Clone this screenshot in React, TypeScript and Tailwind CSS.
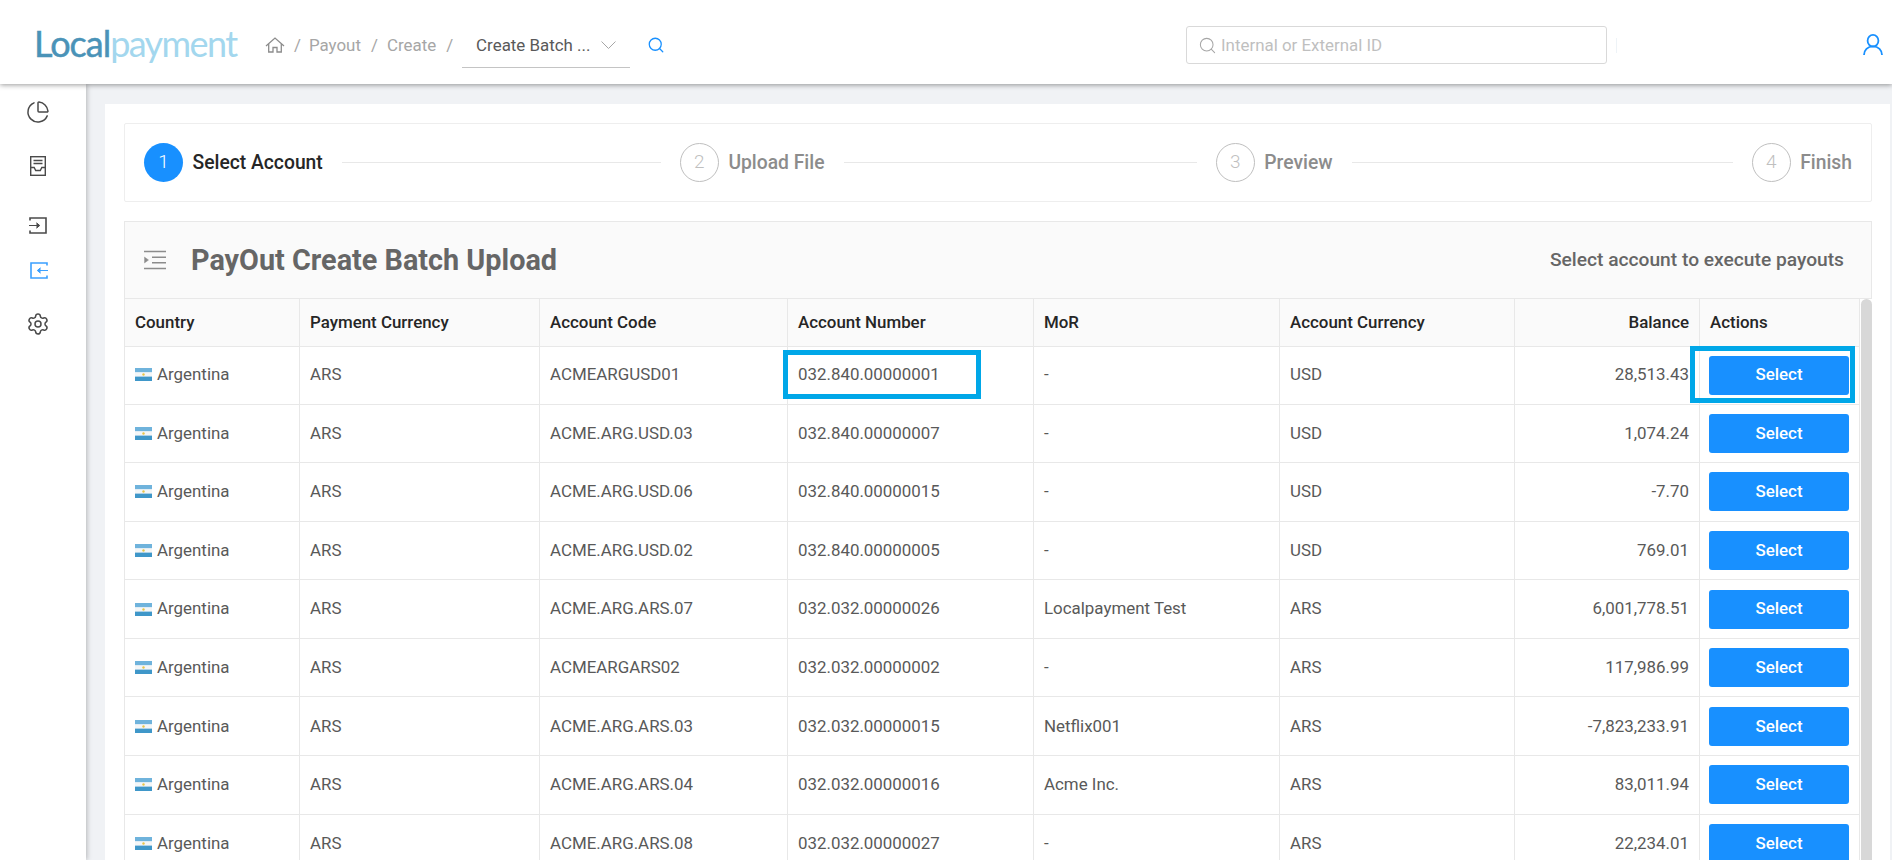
import React from "react";
import { ChartPie, Settings, Search } from "lucide-react";

const rows: [string, string, string, string, string, string][] = [
  ["ARS", "ACMEARGUSD01", "032.840.00000001", "-", "USD", "28,513.43"],
  ["ARS", "ACME.ARG.USD.03", "032.840.00000007", "-", "USD", "1,074.24"],
  ["ARS", "ACME.ARG.USD.06", "032.840.00000015", "-", "USD", "-7.70"],
  ["ARS", "ACME.ARG.USD.02", "032.840.00000005", "-", "USD", "769.01"],
  ["ARS", "ACME.ARG.ARS.07", "032.032.00000026", "Localpayment Test", "ARS", "6,001,778.51"],
  ["ARS", "ACMEARGARS02", "032.032.00000002", "-", "ARS", "117,986.99"],
  ["ARS", "ACME.ARG.ARS.03", "032.032.00000015", "Netflix001", "ARS", "-7,823,233.91"],
  ["ARS", "ACME.ARG.ARS.04", "032.032.00000016", "Acme Inc.", "ARS", "83,011.94"],
  ["ARS", "ACME.ARG.ARS.08", "032.032.00000027", "-", "ARS", "22,234.01"],
];

function Flag() {
  return (
    <svg width="17" height="13" viewBox="0 0 17 13" className="shrink-0">
      <rect width="17" height="4.4" fill="#6fb3dc" />
      <rect y="4.4" width="17" height="4.2" fill="#f4f6f7" />
      <rect y="8.6" width="17" height="4.4" fill="#3f97c9" />
      <circle cx="8.5" cy="6.5" r="1.2" fill="#e8c54a" />
    </svg>
  );
}

function Step({ n, title, active, last }: { n: number; title: string; active?: boolean; last?: boolean }) {
  return (
    <div className={last ? "flex items-center shrink-0" : "flex items-center flex-1"}>
      <div
        className={
          active
            ? "w-[39px] h-[39px] rounded-full bg-[#1890ff] text-white flex items-center justify-center text-[19px] font-light shrink-0"
            : "w-[39px] h-[39px] rounded-full border border-[#bfbfbf] text-[#bfbfbf] flex items-center justify-center text-[19px] font-light shrink-0"
        }
      >
        {n}
      </div>
      <span
        className={
          active
            ? "ml-[9.5px] text-[19.3px] font-medium text-[#262626] leading-none"
            : "ml-[9.5px] text-[19.3px] font-medium text-[#8c8c8c] leading-none"
        }
      >
        {title}
      </span>
      {!last && <div className="flex-1 h-px bg-[#e8e8e8] ml-[19px] mr-[19px]" />}
    </div>
  );
}

const widths = [175, 240, 248, 246, 246, 235, 185, 160];
const heads = ["Country", "Payment Currency", "Account Code", "Account Number", "MoR", "Account Currency", "Balance", "Actions"];

export default function App() {
  return (
    <div className="h-[860px] w-[1892px] overflow-hidden bg-[#f0f2f5] flex flex-col font-['Roboto',sans-serif] text-[16.9px] text-[#595959]">
      <header className="h-[84px] pt-[6px] shrink-0 bg-white flex items-center shadow-[0_1px_5px_rgba(0,0,0,0.4)] relative z-10">
        <div className="ml-[34px] w-[206px] shrink-0 font-['Lato',sans-serif] text-[36px] leading-none whitespace-nowrap pb-[4px]">
          <span className="text-[#4a93b8] font-normal tracking-[-1px] [-webkit-text-stroke:0.5px_#4a93b8]">Local</span>
          <span className="text-[#a3d7ee] font-normal tracking-[-1.6px]">payment</span>
        </div>
        <svg viewBox="0 0 20 16" width="20" height="16" fill="none" stroke="#8c8c8c" strokeWidth="1.3" className="ml-[25px]">
          <path d="M1 9L10 1l9 8" />
          <path d="M3.7 7v8h4.3v-4.5h4V15h4.3V7" />
        </svg>
        <span className="ml-[9px] mt-[1px] text-[#a6a6a6]">/</span>
        <span className="ml-[8px] mt-[1px] text-[#a6a6a6]">Payout</span>
        <span className="ml-[10px] mt-[1px] text-[#a6a6a6]">/</span>
        <span className="ml-[9px] mt-[1px] text-[#a6a6a6]">Create</span>
        <span className="ml-[10px] mt-[1px] text-[#a6a6a6]">/</span>
        <div className="ml-[9px] w-[168px] h-[44px] border-b border-[#c4c4c4] flex items-center pl-[14px] pr-[14px] justify-between mt-[1px]">
          <span className="text-[#595959] whitespace-nowrap mt-[1px]">Create Batch ...</span>
          <svg viewBox="0 0 15 8" width="15" height="8" fill="none" stroke="#a6a6a6" strokeWidth="1">
            <path d="M0.5 0.5L7.5 7.5l7-7" />
          </svg>
        </div>
        <Search size={18} strokeWidth={1.7} className="ml-[17px] text-[#1890ff]" />
        <div className="ml-auto w-[421px] h-[38px] border border-[#d9d9d9] rounded-[3px] flex items-center pl-[11px]">
          <Search size={19} strokeWidth={1.3} className="text-[#a6a6a6]" />
          <span className="ml-[4px] mt-[1px] text-[#bfbfbf]">Internal or External ID</span>
        </div>
        <div className="ml-[9px] w-px h-[15px] bg-[#eef3f7]" />
        <svg viewBox="0 0 20 21" width="20" height="21" fill="none" stroke="#1890ff" strokeWidth="1.8" className="ml-[246px] mr-[9px] mt-[-1px]">
          <ellipse cx="10" cy="6.7" rx="5.4" ry="5.8" />
          <path d="M1 21c0-5 3.6-8.6 9-8.6s9 3.6 9 8.6" />
        </svg>
      </header>

      <div className="flex-1 flex min-h-0">
        <aside className="w-[86px] shrink-0 bg-white shadow-[1px_0_5px_rgba(0,0,0,0.25)] flex flex-col items-center">
          <ChartPie size={24} strokeWidth={1.5} className="mt-[16px] mr-[10px] text-[#4a4a4a]" />
          <svg viewBox="0 0 16 20" width="16" height="20" className="mt-[32px] mr-[10px] text-[#4a4a4a]" fill="none" stroke="currentColor" strokeWidth="1.4">
            <rect x="0.7" y="0.7" width="14.6" height="18.6" />
            <path d="M3.5 4.5h9M3.5 7.5h9M0.7 11.5h3.5l1.5 3h4.6l1.5-3h3.5" />
          </svg>
          <svg viewBox="0 0 18 17" width="18" height="17" className="mt-[41px] mr-[10px] text-[#4a4a4a]" fill="none" stroke="currentColor" strokeWidth="1.6">
            <path d="M1 3.5V1h16v15H1v-2.5" />
            <path d="M0 8.5h10M7.5 5.8l3.2 2.7-3.2 2.7" fill="currentColor" strokeWidth="1" />
          </svg>
          <svg viewBox="0 0 18 17" width="18" height="17" className="mt-[28px] mr-[9px] text-[#3ba0ff]" fill="none" stroke="currentColor" strokeWidth="1.6">
            <path d="M17 3.5V1H1v15h16v-2.5" />
            <path d="M18 8.5H8M10.5 5.8L7.3 8.5l3.2 2.7" fill="currentColor" strokeWidth="1" />
          </svg>
          <Settings size={24} strokeWidth={1.5} className="mt-[33px] mr-[10px] text-[#4a4a4a]" />
        </aside>

        <main className="flex-1 min-w-0 pl-[19px] pt-[20px] pr-[2px]">
          <div className="bg-white h-full pl-[19px] pt-[19px] pr-[18px]">
            <div className="h-[79px] border border-[#eeeeee] rounded-[2px] pl-[19px] pr-[19px] flex items-center">
              <Step n={1} title="Select Account" active />
              <Step n={2} title="Upload File" />
              <Step n={3} title="Preview" />
              <Step n={4} title="Finish" last />
            </div>

            <div className="mt-[19px] h-[78px] bg-[#fafafa] border border-[#e8e8e8] flex items-center pl-[19px] pr-[27px]">
              <svg viewBox="0 0 22 20" width="22" height="20" fill="none" className="text-[#8c8c8c]" stroke="currentColor" strokeWidth="1.6">
                <path d="M0 1.5h22M8 7.2h14M8 12.8h14M0 18.5h22" />
                <path d="M0.5 7l4 3-4 3z" fill="currentColor" strokeWidth="0.4" />
              </svg>
              <h1 className="ml-[25px] text-[28.8px] font-bold text-[#666666] leading-none">PayOut Create Batch Upload</h1>
              <span className="ml-auto text-[19.2px] font-medium text-[#666666]">Select account to execute payouts</span>
            </div>

            <div className="flex">
              <table className="table-fixed border-collapse w-[1735px] shrink-0 self-start">
                <colgroup>
                  {widths.map((w, i) => (
                    <col key={i} style={{ width: w }} />
                  ))}
                </colgroup>
                <thead>
                  <tr className="h-[47px] bg-[#fafafa]">
                    {heads.map((h, i) => (
                      <th
                        key={h}
                        className={
                          i === 6
                            ? "border border-[#e8e8e8] border-t-0 px-[10px] text-right font-medium text-[#262626]"
                            : "border border-[#e8e8e8] border-t-0 px-[10px] text-left font-medium text-[#262626]"
                        }
                      >
                        {h}
                      </th>
                    ))}
                  </tr>
                </thead>
                <tbody>
                  {rows.map((r, i) => (
                    <tr key={i} className={i === 0 ? "h-[58px]" : "h-[58.6px]"}>
                      <td className="border border-[#e8e8e8] px-[10px]">
                        <span className="flex items-center gap-[5px]">
                          <Flag />
                          Argentina
                        </span>
                      </td>
                      <td className="border border-[#e8e8e8] px-[10px]">{r[0]}</td>
                      <td className="border border-[#e8e8e8] px-[10px]">{r[1]}</td>
                      <td className="border border-[#e8e8e8] px-[10px] relative">
                        {r[2]}
                        {i === 0 && (
                          <div className="absolute left-[-5px] top-[3px] w-[198px] h-[49px] border-[5px] border-[#00a7e8]" />
                        )}
                      </td>
                      <td className="border border-[#e8e8e8] px-[10px]">{r[3]}</td>
                      <td className="border border-[#e8e8e8] px-[10px]">{r[4]}</td>
                      <td className="border border-[#e8e8e8] px-[10px] text-right">{r[5]}</td>
                      <td className="border border-[#e8e8e8] pl-[9px] pr-[10px] relative">
                        <button className="w-[140px] h-[39px] rounded-[3px] bg-[#1890ff] text-white font-medium flex items-center justify-center">
                          Select
                        </button>
                        {i === 0 && (
                          <div className="absolute left-[-10px] top-[-1px] w-[165px] h-[57px] border-[5px] border-[#00a7e8]" />
                        )}
                      </td>
                    </tr>
                  ))}
                </tbody>
              </table>
              <div className="w-[12px] ml-[1px] bg-[#d8d8d8] rounded-t-[6px]" />
            </div>
          </div>
        </main>
      </div>
    </div>
  );
}
